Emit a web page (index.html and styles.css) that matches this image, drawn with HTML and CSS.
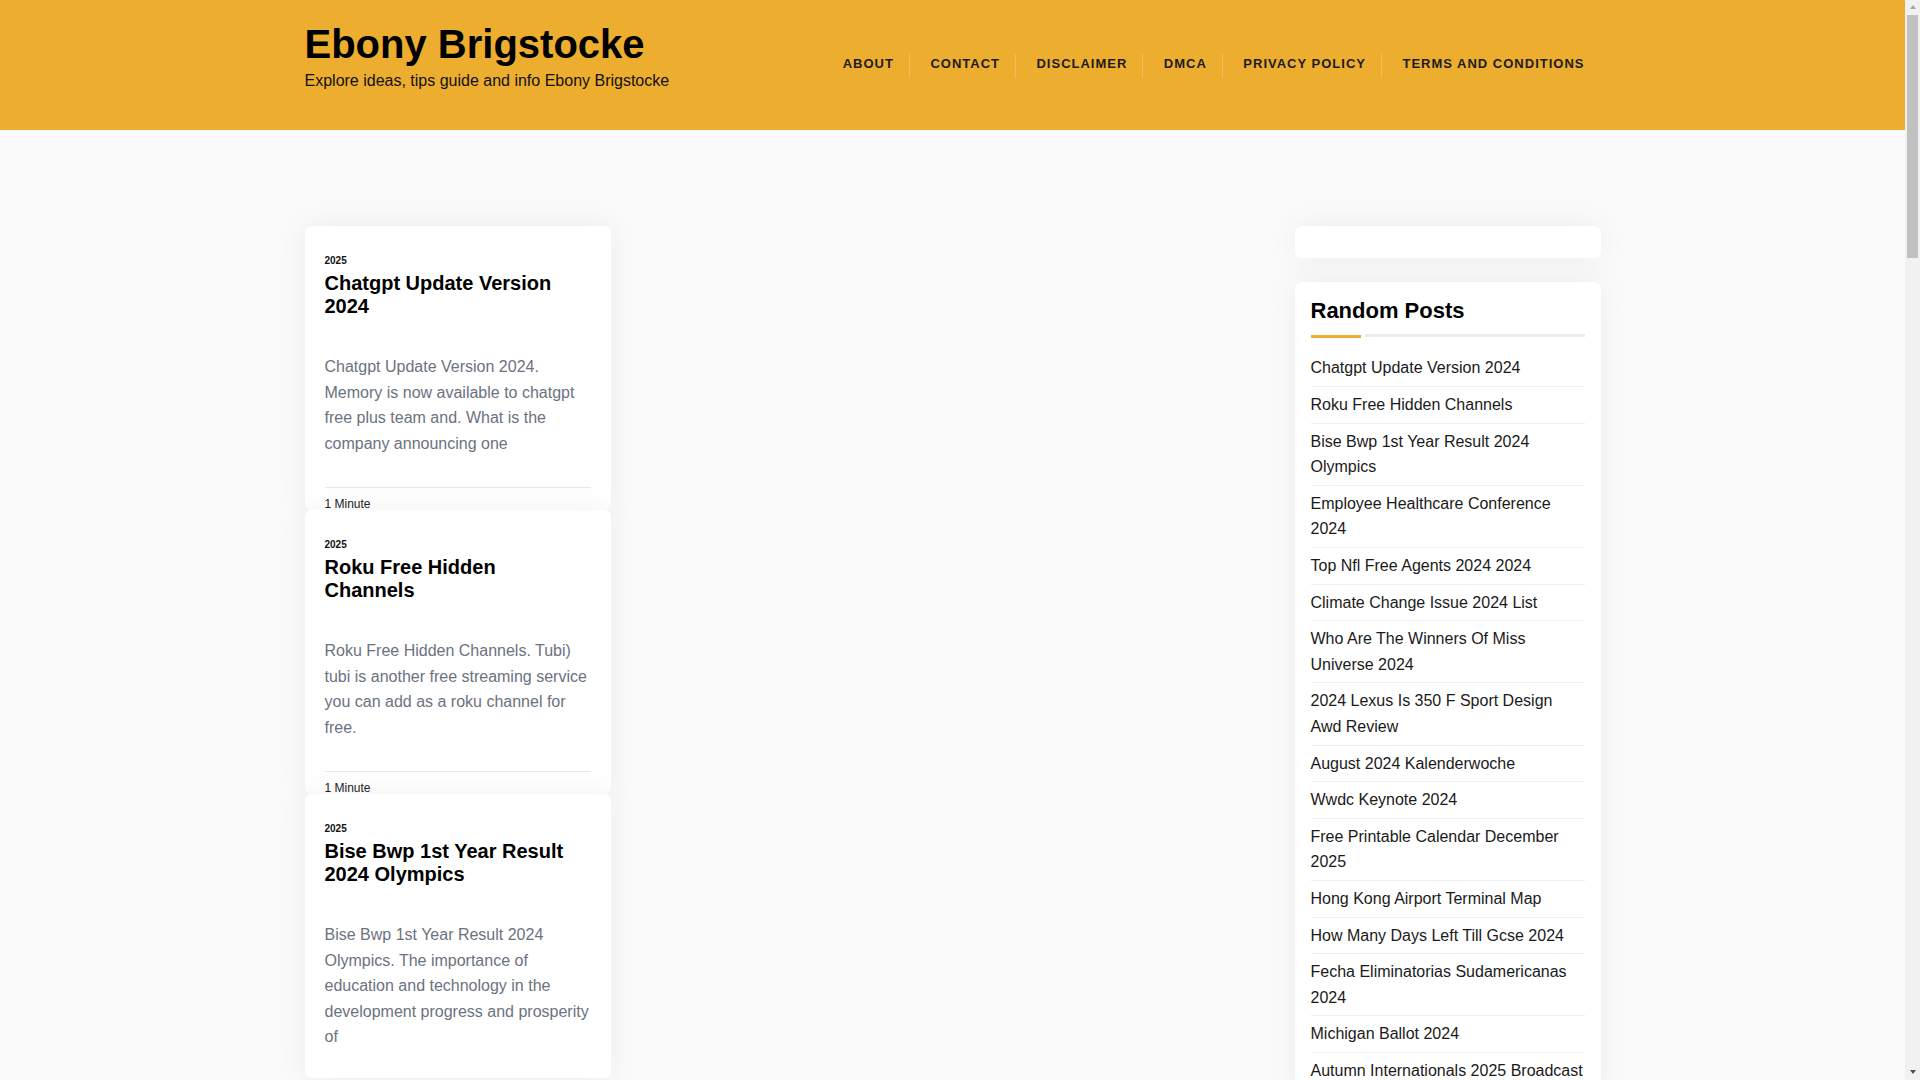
FILE: index.html
```html
<!DOCTYPE html>
<html lang="en">
<head>
<meta charset="utf-8">
<title>Ebony Brigstocke</title>
<link rel="stylesheet" href="styles.css">
</head>
<body>
<header class="site-header">
  <div class="container header-inner">
    <div class="branding">
      <h1 class="site-title">Ebony Brigstocke</h1>
      <p class="site-desc">Explore ideas, tips guide and info Ebony Brigstocke</p>
    </div>
    <nav class="main-nav">
      <ul class="nav-list">
        <li>ABOUT</li>
        <li>CONTACT</li>
        <li>DISCLAIMER</li>
        <li>DMCA</li>
        <li>PRIVACY POLICY</li>
        <li>TERMS AND CONDITIONS</li>
      </ul>
    </nav>
  </div>
</header>

<div class="container content-grid">
  <main class="posts">
    <article class="card">
      <div class="card-date">2025</div>
      <h2 class="card-title">Chatgpt Update Version 2024</h2>
      <p class="card-excerpt">Chatgpt Update Version 2024. Memory is now available to chatgpt free plus team and. What is the company announcing one</p>
      <div class="card-meta">1 Minute</div>
    </article>
    <article class="card">
      <div class="card-date">2025</div>
      <h2 class="card-title">Roku Free Hidden Channels</h2>
      <p class="card-excerpt">Roku Free Hidden Channels. Tubi) tubi is another free streaming service you can add as a roku channel for free.</p>
      <div class="card-meta">1 Minute</div>
    </article>
    <article class="card">
      <div class="card-date">2025</div>
      <h2 class="card-title">Bise Bwp 1st Year Result 2024 Olympics</h2>
      <p class="card-excerpt">Bise Bwp 1st Year Result 2024 Olympics. The importance of education and technology in the development progress and prosperity of</p>
      <div class="card-meta">1 Minute</div>
    </article>
  </main>

  <aside class="sidebar">
    <section class="widget widget-empty"></section>
    <section class="widget">
      <h3 class="widget-title">Random Posts</h3>
      <div class="title-bar"><span class="accent"></span><span class="rule"></span></div>
      <ul class="post-list">
        <li>Chatgpt Update Version 2024</li>
        <li>Roku Free Hidden Channels</li>
        <li>Bise Bwp 1st Year Result 2024 Olympics</li>
        <li>Employee Healthcare Conference 2024</li>
        <li>Top Nfl Free Agents 2024 2024</li>
        <li>Climate Change Issue 2024 List</li>
        <li>Who Are The Winners Of Miss Universe 2024</li>
        <li>2024 Lexus Is 350 F Sport Design Awd Review</li>
        <li>August 2024 Kalenderwoche</li>
        <li>Wwdc Keynote 2024</li>
        <li>Free Printable Calendar December 2025</li>
        <li>Hong Kong Airport Terminal Map</li>
        <li>How Many Days Left Till Gcse 2024</li>
        <li>Fecha Eliminatorias Sudamericanas 2024</li>
        <li>Michigan Ballot 2024</li>
        <li>Autumn Internationals 2025 Broadcast</li>
      </ul>
    </section>
  </aside>
</div>

<div class="scrollbar" aria-hidden="true">
  <span class="sb-arrow sb-up"></span>
  <span class="sb-thumb"></span>
  <span class="sb-spacer"></span>
  <span class="sb-arrow sb-down"></span>
</div>
</body>
</html>
```

FILE: styles.css
```css
html, body {
  margin: 0;
  padding: 0;
}

body {
  margin-right: 15px;
  background: #fafafa;
  font-family: "Liberation Sans", Arial, sans-serif;
  color: #222;
}

.container {
  width: 1296px;
  margin: 0 auto;
}

/* Header */
.site-header {
  background: #edad2e;
  height: 130px;
}

.header-inner {
  display: flex;
  justify-content: space-between;
  align-items: center;
  height: 100%;
}

.branding {
  padding-bottom: 18px;
}

.site-title {
  margin: 0;
  font-size: 40px;
  line-height: 48px;
  font-weight: 700;
  color: #000;
}

.site-desc {
  margin: 1px 0 0;
  font-size: 16px;
  line-height: 24px;
  color: #111;
}

.main-nav {
  padding-top: 2px;
}

.nav-list {
  display: flex;
  list-style: none;
  margin: 0;
  padding: 0;
}

.nav-list li {
  padding: 0 15px 4px 20.5px;
  line-height: 20px;
  font-size: 13px;
  font-weight: 700;
  letter-spacing: 1px;
  color: #1c1c1c;
  border-left: 1px solid rgba(255, 255, 255, 0.22);
}

.nav-list li:first-child {
  border-left: 0;
}

.nav-list li:last-child {
  padding-right: 16px;
}

/* Content */
.content-grid {
  display: grid;
  grid-template-columns: repeat(4, 1fr);
  gap: 24px;
  padding-top: 96px;
  min-height: 4444px;
  align-items: start;
}

.posts {
  grid-column: 1;
}

.sidebar {
  grid-column: 4;
}

.card {
  background: #fff;
  border-radius: 6px;
  box-shadow: 0 0 30px rgba(0, 0, 0, 0.06);
  height: 284px;
  box-sizing: border-box;
  padding: 28px 20px 0;
  overflow: hidden;
}

.card-date {
  font-size: 10px;
  line-height: 14px;
  font-weight: 700;
  color: #111;
  margin-bottom: 4px;
}

.card-title {
  margin: 0;
  font-size: 20px;
  line-height: 23px;
  font-weight: 700;
  color: #000;
}

.card-excerpt {
  margin: 36px 0 0;
  font-size: 16px;
  line-height: 1.6;
  color: #6b7280;
}

.card-meta {
  margin-top: 31px;
  border-top: 1px solid #e8e8e8;
  padding-top: 7px;
  font-size: 12px;
  line-height: 18px;
  color: #222;
}

/* Sidebar */
.widget {
  background: #fff;
  border-radius: 6px;
  box-shadow: 0 0 30px rgba(0, 0, 0, 0.06);
  padding: 16px;
}

.widget + .widget {
  margin-top: 24px;
}

.widget-empty {
  height: 32px;
  box-sizing: border-box;
}

.widget-title {
  margin: 0 0 10px;
  font-size: 22px;
  line-height: 26.4px;
  font-weight: 700;
  color: #000;
}

.title-bar {
  display: flex;
  gap: 4px;
  height: 4px;
}

.title-bar .accent {
  width: 50px;
  height: 3px;
  margin-top: 1px;
  background: #edad2e;
}

.title-bar .rule {
  flex: 1;
  height: 3px;
  background: #ececec;
}

.post-list {
  list-style: none;
  margin: 12px 0 0;
  padding: 0;
}

.post-list li {
  padding: 5px 0;
  border-bottom: 1px solid #eee;
  font-size: 16px;
  line-height: 1.6;
  color: #1a1a1a;
}

/* Browser scrollbar drawn over the right edge */
.scrollbar {
  position: fixed;
  top: 0;
  right: 0;
  width: 15px;
  height: 100vh;
  background: #f1f1f1;
  display: flex;
  flex-direction: column;
  align-items: center;
}

.sb-arrow {
  width: 0;
  height: 0;
}

.sb-up {
  margin-top: 5px;
  border-left: 3.5px solid transparent;
  border-right: 3.5px solid transparent;
  border-bottom: 4px solid #a3a3a3;
}

.sb-thumb {
  margin-top: 6px;
  width: 11px;
  height: 243px;
  background: #c1c1c1;
}

.sb-spacer {
  flex: 1;
}

.sb-down {
  margin-bottom: 6px;
  border-left: 3.5px solid transparent;
  border-right: 3.5px solid transparent;
  border-top: 4px solid #505050;
}
```
